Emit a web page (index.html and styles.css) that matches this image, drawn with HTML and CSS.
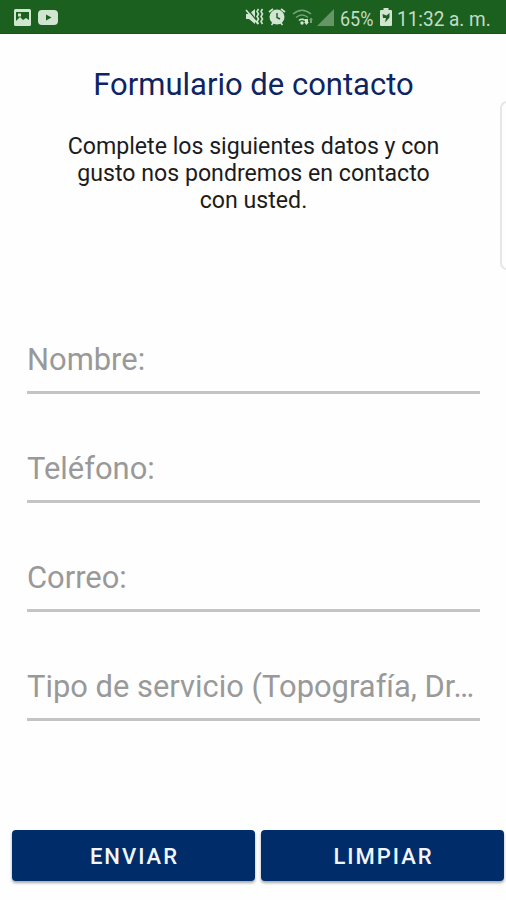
FILE: index.html
```html
<!DOCTYPE html>
<html lang="es">
<head>
  <meta charset="UTF-8">
  <meta name="viewport" content="width=device-width, initial-scale=1.0">
  <title>Formulario de contacto</title>
  <link rel="stylesheet" href="styles.css">
</head>
<body>

  <!-- Status bar -->
  <div class="status-bar">
    <div class="status-left">
      <svg class="icon-image" width="17" height="17" viewBox="0 0 17 17">
        <path fill-rule="evenodd" d="M1.500 0h14A1.500 1.500 0 0 1 17 1.500v14a1.500 1.500 0 0 1-1.500 1.500h-14A1.500 1.500 0 0 1 0 15.500v-14A1.500 1.500 0 0 1 1.500 0zM2 3v9l4-4 3 3 3-2 3 2V3zM4 4.500h3v3H4z"/>
      </svg>
      <svg class="icon-video" width="20" height="15" viewBox="0 0 20 15">
        <path fill-rule="evenodd" d="M4 0h12q4 0 4 4v7q0 4-4 4H4q-4 0-4-4V4q0-4 4-4zM8 4.500v6l5.500-3z"/>
      </svg>
    </div>
    <div class="status-right">
      <svg class="icon-mute" width="19" height="18" viewBox="0 0 19 18">
        <path d="M1 6h3l6-5v15l-6-5H1z"/>
        <path class="slash" d="M2.500 1l11 14"/>
        <path class="line" d="M1 2l12 14M13.500 1l-1.500 2.500 1.500 2.500-1.500 2.500 1.500 2.500-1.500 2.500 1.500 2.500M17.500 1L16 3.500 17.500 6 16 8.500l1.500 2.500-1.500 2.500 1.500 2.500"/>
      </svg>
      <svg class="icon-alarm" width="18" height="18" viewBox="0 0 18 18">
        <circle cx="9" cy="9" r="7.500"/>
        <path class="line" d="M1 4l4-3M17 4l-4-3M3.500 17l2-2.500M14.500 17l-2-2.500"/>
        <path class="hands" d="M9 5v4.500l3 1.500"/>
      </svg>
      <svg class="icon-wifi" width="22" height="18" viewBox="0 0 22 18">
        <path class="line dim" d="M1 6q9-7.500 18 0M4 9.500q6-5 12 0"/>
        <path class="line" d="M7 12.500q3-2.500 6 0"/>
        <circle cx="10" cy="15" r="1.700"/>
        <path d="M13 11h3v3h1l-2.500 3-2.500-3h1z"/>
        <path class="dim" d="M18 15v-3h-1l2-2.500 2 2.500h-1v3z"/>
      </svg>
      <svg class="icon-signal" width="17" height="17" viewBox="0 0 17 17">
        <path d="M17 0v17H0z"/>
      </svg>
      <span class="battery-text">65%</span>
      <svg class="icon-battery" width="12" height="18" viewBox="0 0 12 18">
        <path d="M3.500 0h5v2H11q1 0 1 1v14q0 1-1 1H1q-1 0-1-1V3q0-1 1-1h2.500z"/>
        <path class="bolt" d="M2.500 6l4 1.500L9.500 5v4.500L5 14.500l1-4.500H3z"/>
      </svg>
      <span class="clock">11:32 a. m.</span>
    </div>
  </div>

  <!-- Contact form -->
  <main class="contact">
    <h1>Formulario de contacto</h1>
    <p>Complete los siguientes datos y con<br>gusto nos pondremos en contacto<br>con usted.</p>

    <form>
      <div class="fields">
        <input type="text" placeholder="Nombre:">
        <input type="tel" placeholder="Teléfono:">
        <input type="email" placeholder="Correo:">
        <input type="text" placeholder="Tipo de servicio (Topografía, Dr…">
      </div>
      <div class="buttons">
        <button type="submit">ENVIAR</button>
        <button type="reset">LIMPIAR</button>
      </div>
    </form>
  </main>

  <!-- Edge panel handle, over the page -->
  <div class="edge-handle"></div>

</body>
</html>
```

FILE: styles.css
```css
* {
  box-sizing: border-box;
}

body {
  position: relative;
  margin: 0;
  height: 900px;
  overflow: hidden;
  background-color: #fefefe;
  font-family: Roboto, sans-serif;
}

.status-bar {
  display: flex;
  justify-content: space-between;
  height: 34px;
  padding: 1px 15px 0 14px;
  background-color: #1b601f;
  border-bottom: 1px solid #175019;
  color: #c4dcc5;
}

.status-bar svg {
  display: block;
  flex: none;
  fill: #d0e6d0;
}

.status-left,
.status-right {
  display: flex;
  align-items: center;
}

.status-left {
  gap: 7px;
}

.status-bar .line {
  fill: none;
  stroke: #d0e6d0;
  stroke-width: 1.6;
}

.status-bar .slash {
  fill: none;
  stroke: #1b601f;
  stroke-width: 1.4;
}

.status-bar .hands {
  fill: none;
  stroke: #1b601f;
  stroke-width: 1.4;
}

.status-bar .dim {
  opacity: 0.5;
}

.status-bar .bolt {
  fill: #1b601f;
}

.icon-alarm {
  margin-left: 4px;
}

.icon-wifi {
  margin-left: 6px;
}

.status-bar .icon-signal {
  margin-left: 3px;
  fill: #669568;
}

.battery-text,
.clock {
  flex: none;
  font-size: 20px;
  line-height: 24px;
  white-space: nowrap;
  transform: scaleX(0.9);
  transform-origin: left;
  margin-top: 3px;
}

.battery-text {
  width: 34px;
  margin-left: 6px;
}

.icon-battery {
  margin-left: 6px;
}

.clock {
  width: 94px;
  margin-left: 5px;
  transform: scaleX(0.95);
}

.contact {
  text-align: center;
}

.contact h1 {
  margin: 0 0 0 1px;
  padding-top: 33px;
  color: #0d2563;
  font-size: 31px;
  font-weight: 400;
  line-height: 36px;
}

.contact p {
  margin: 30px 0 0 1px;
  color: #1c1c1c;
  font-size: 23.15px;
  line-height: 27px;
}

.fields {
  display: flex;
  flex-direction: column;
  gap: 49px;
  margin: 120px 26px 0 27px;
}

.fields input {
  width: 100%;
  height: 60px;
  padding: 0 0 6px;
  border: none;
  border-bottom: 3px solid #c4c4c4;
  border-radius: 0;
  outline: none;
  background: transparent;
  color: #1c1c1c;
  font-family: inherit;
  font-size: 30.9px;
}

.fields input::placeholder {
  color: #999999;
  opacity: 1;
}

.buttons {
  display: flex;
  gap: 6px;
  margin: 109px 2px 0 12px;
}

.buttons button {
  flex: 1;
  height: 51px;
  padding: 2px 0 0 2px;
  border: none;
  border-radius: 4px;
  background-color: #002c6a;
  box-shadow: 0 2px 3px rgba(0, 0, 0, 0.35);
  color: #f2f6fc;
  font-family: inherit;
  font-size: 22px;
  font-weight: 500;
  letter-spacing: 2px;
}

.edge-handle {
  position: absolute;
  top: 101px;
  right: -8px;
  width: 14px;
  height: 169px;
  border: 2px solid #e6e6e6;
  border-radius: 7px;
}
```
